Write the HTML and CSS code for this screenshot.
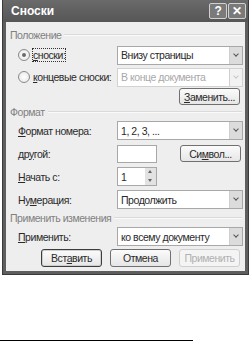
FILE: index.html
```html
<!DOCTYPE html>
<html lang="ru">
<head>
    <meta charset="UTF-8">
    <title>Сноски</title>
    <link rel="stylesheet" href="styles.css">
</head>
<body>

    <div class="dialog">
        <div class="titlebar">
            <span class="title">Сноски</span>
            <div class="tb-buttons">
                <span class="tb-btn">?</span>
                <span class="tb-btn">&#x2715;</span>
            </div>
        </div>

        <div class="content">
            <div class="group-label first"><span>Положение</span></div>

            <div class="row tall">
                <label class="radio-label"><span class="radio checked"></span><span class="focus"><u>с</u>носки:</span></label>
                <div class="select"><span>Внизу страницы</span><span class="arrow"></span></div>
            </div>
            <div class="row tall">
                <label class="radio-label"><span class="radio"></span><span><u>к</u>онцевые сноски:</span></label>
                <div class="select disabled"><span>В конце документа</span><span class="arrow"></span></div>
            </div>
            <div class="row right">
                <button class="btn"><u>З</u>аменить...</button>
            </div>

            <div class="group-label"><span>Формат</span></div>

            <div class="row">
                <span class="label"><u>Ф</u>ормат номера:</span>
                <div class="select"><span>1, 2, 3, ...</span><span class="arrow"></span></div>
            </div>
            <div class="row">
                <span class="label">др<u>у</u>гой:</span>
                <div class="split">
                    <div class="input"></div>
                    <button class="btn">Си<u>м</u>вол...</button>
                </div>
            </div>
            <div class="row">
                <span class="label"><u>Н</u>ачать с:</span>
                <div class="spinner"><span>1</span><span class="spin-btns"><i class="up"></i><i class="down"></i></span></div>
            </div>
            <div class="row">
                <span class="label">Ну<u>м</u>ерация:</span>
                <div class="select"><span>Продолжить</span><span class="arrow"></span></div>
            </div>

            <div class="group-label"><span>Применить изменения</span></div>

            <div class="row">
                <span class="label"><u>П</u>рименить:</span>
                <div class="select"><span>ко всему документу</span><span class="arrow"></span></div>
            </div>

            <div class="footer">
                <button class="btn default">Вст<u>а</u>вить</button>
                <button class="btn">Отмена</button>
                <button class="btn" disabled>Применить</button>
            </div>
        </div>
    </div>

    <div class="rule"></div>

</body>
</html>
```

FILE: styles.css
```css
* {
    margin: 0;
    padding: 0;
    box-sizing: border-box;
}

body {
    font-family: "Liberation Sans", Arial, sans-serif;
    font-size: 10.5px;
    letter-spacing: -0.45px;
    color: #2a2a2a;
    background: #fff;
    width: 249px;
    height: 342px;
    overflow: hidden;
    white-space: nowrap;
}

.dialog {
    margin-left: 2px;
    width: 247px;
    background: #5e5e5e;
    border: 1px solid #3a3a3a;
    border-top: none;
    padding: 0 3px 3px 3px;
}

.titlebar {
    height: 22px;
    display: flex;
    align-items: center;
    justify-content: space-between;
    padding-left: 5px;
    background: linear-gradient(#6a6a6a, #565656);
    margin: 0 -3px;
    padding-right: 3px;
    padding-left: 8px;
}

.title {
    color: #fff;
    font-weight: bold;
    font-size: 12px;
    letter-spacing: 0;
}

.tb-buttons {
    display: flex;
    gap: 1px;
    margin-right: -1px;
}

.tb-btn {
    width: 18px;
    height: 16px;
    border: 1px solid #d0d0d0;
    border-radius: 2px;
    background: #7a7a7a;
    color: #fff;
    font-weight: bold;
    font-size: 12px;
    display: flex;
    align-items: center;
    justify-content: center;
}

.content {
    background: #eeeeee;
    padding: 4px 3px 0 4px;
}

.group-label {
    display: flex;
    align-items: center;
    gap: 3px;
    color: #808080;
    height: 14px;
}

.group-label.first {
    height: 18px;
}

.group-label::after {
    content: "";
    flex: 1;
    border-top: 1px solid #dadada;
    border-bottom: 1px solid #fafafa;
}

.row {
    display: grid;
    grid-template-columns: 99px 126px;
    align-items: center;
    height: 23px;
    padding-left: 8px;
}

.row.tall {
    height: 22px;
}

.row.right {
    display: flex;
    justify-content: flex-end;
    height: 17px;
    padding-right: 2px;
}

.radio-label {
    display: flex;
    align-items: center;
    gap: 3px;
}

.radio {
    width: 12px;
    height: 12px;
    border: 1px solid #8a8a8a;
    border-radius: 50%;
    background: radial-gradient(#ffffff, #e4e4e4);
    position: relative;
}

.radio.checked::after {
    content: "";
    position: absolute;
    left: 3px;
    top: 3px;
    width: 4px;
    height: 4px;
    border-radius: 50%;
    background: #6a6a6a;
}

.focus {
    outline: 1px dotted #333;
}

.select {
    height: 19px;
    border: 1px solid #a8a8a8;
    background: #fff;
    display: flex;
    align-items: center;
    justify-content: space-between;
    padding-left: 3px;
}

.select.disabled {
    color: #a8a8a8;
    border-color: #d2d2d2;
}

.arrow {
    width: 13px;
    height: 17px;
    background: #dcdcdc;
    border-left: 1px solid #cfcfcf;
    position: relative;
}

.arrow::after {
    content: "";
    position: absolute;
    left: 4px;
    top: 5px;
    width: 3px;
    height: 3px;
    border-right: 1.5px solid #555;
    border-bottom: 1.5px solid #555;
    transform: rotate(45deg);
}

.select.disabled .arrow {
    background: #f2f2f2;
}

.select.disabled .arrow::after {
    border-color: #c8c8c8;
}

.split {
    display: flex;
    justify-content: space-between;
    align-items: center;
    padding-right: 2px;
}

.input {
    width: 40px;
    height: 18px;
    border: 1px solid #a8a8a8;
    background: #fff;
}

.spinner {
    width: 40px;
    height: 19px;
    border: 1px solid #a8a8a8;
    background: #fff;
    display: flex;
    align-items: center;
    justify-content: space-between;
    padding-left: 3px;
}

.spin-btns {
    display: flex;
    flex-direction: column;
    width: 11px;
    height: 17px;
    background: #e2e2e2;
}

.spin-btns i {
    flex: 1;
    position: relative;
}

.spin-btns i::after {
    content: "";
    position: absolute;
    left: 3px;
    border-left: 2.5px solid transparent;
    border-right: 2.5px solid transparent;
}

.spin-btns .up::after {
    top: 2px;
    border-bottom: 3px solid #666;
}

.spin-btns .down::after {
    top: 2px;
    border-top: 3px solid #666;
}

.btn {
    font-family: inherit;
    font-size: 10.5px;
    letter-spacing: -0.45px;
    color: #2a2a2a;
    height: 17px;
    width: 61px;
    border: 1px solid #707070;
    border-radius: 3px;
    background: linear-gradient(#fbfbfb, #e6e6e6);
}

.footer .btn {
    height: 18px;
}

.btn.default {
    border-color: #3c3c3c;
    box-shadow: inset 0 0 0 1px #cfcfcf;
}

.btn:disabled {
    color: #b0b0b0;
    border-color: #cfcfcf;
    background: #f4f4f4;
}

.footer {
    display: flex;
    justify-content: flex-end;
    gap: 8px;
    padding: 1px 2px 4px 0;
}

.rule {
    margin-top: 65px;
    width: 193px;
    border-top: 1px solid #000;
}
```
